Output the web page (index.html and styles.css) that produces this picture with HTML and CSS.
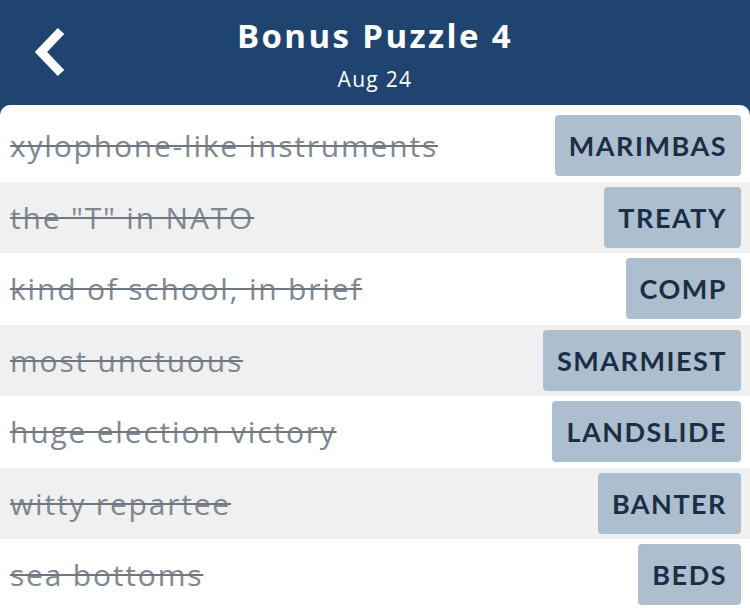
FILE: index.html
```html
<!DOCTYPE html>
<html lang="en">
<head>
    <meta charset="UTF-8">
    <meta name="viewport" content="width=device-width, initial-scale=1.0">
    <title>Bonus Puzzle 4</title>
    <link rel="stylesheet" href="styles.css">
</head>
<body>
    <div class="header">
        <div class="back">
            <svg width="34" height="52" viewBox="0 0 34 52">
                <path d="M27 4 L7 25 L27 46" fill="none" stroke="#fff" stroke-width="9" stroke-linecap="butt" stroke-linejoin="miter"/>
            </svg>
        </div>
        <div class="title">Bonus Puzzle 4</div>
        <div class="date">Aug 24</div>
    </div>

    <div class="list">
        <div class="row">
            <span class="clue">xylophone-like instruments</span>
            <span class="answer">MARIMBAS</span>
        </div>
        <div class="row">
            <span class="clue">the "T" in NATO</span>
            <span class="answer">TREATY</span>
        </div>
        <div class="row">
            <span class="clue">kind of school, in brief</span>
            <span class="answer">COMP</span>
        </div>
        <div class="row">
            <span class="clue">most unctuous</span>
            <span class="answer">SMARMIEST</span>
        </div>
        <div class="row">
            <span class="clue">huge election victory</span>
            <span class="answer">LANDSLIDE</span>
        </div>
        <div class="row">
            <span class="clue">witty repartee</span>
            <span class="answer">BANTER</span>
        </div>
        <div class="row">
            <span class="clue">sea bottoms</span>
            <span class="answer">BEDS</span>
        </div>
    </div>
</body>
</html>
```

FILE: styles.css
```css
body {
    margin: 0;
    padding: 0;
    font-family: "Open Sans", "Lato", sans-serif;
    background-color: #1f4470; /* header blue shows behind the card corners */
    overflow: hidden;
}

.header {
    position: relative;
    height: 105px;
    color: #fff;
    text-align: center;
}

.back {
    position: absolute;
    left: 34px;
    top: 27px;
}

.title {
    padding-top: 14px;
    font-size: 33px;
    font-weight: 700;
    line-height: 44px;
    letter-spacing: 2.4px;
}

.date {
    font-size: 21px;
    line-height: 28px;
    margin-top: 7px;
    letter-spacing: 1.3px;
}

.list {
    background-color: #fff;
    border-radius: 10px 10px 0 0;
    padding-top: 5px;
    height: 503px;
}

.row {
    display: flex;
    align-items: center;
    justify-content: space-between;
    height: 71.5px;
    padding: 0 9px 0 10px;
}

.row:nth-child(even) {
    background-color: #f0f0f0;
}

.clue {
    font-size: 30px;
    letter-spacing: 1.8px;
    color: #80878f;
    text-decoration: line-through;
    text-decoration-color: #6f7882;
    text-decoration-thickness: 2px;
}

.answer {
    display: flex;
    align-items: center;
    height: 61px;
    padding: 0 14px;
    background-color: #adbfcf;
    border-radius: 4px;
    color: #1c2e45;
    font-family: "Lato", sans-serif;
    font-size: 27px;
    font-weight: 700;
    letter-spacing: 1.5px;
}
```
